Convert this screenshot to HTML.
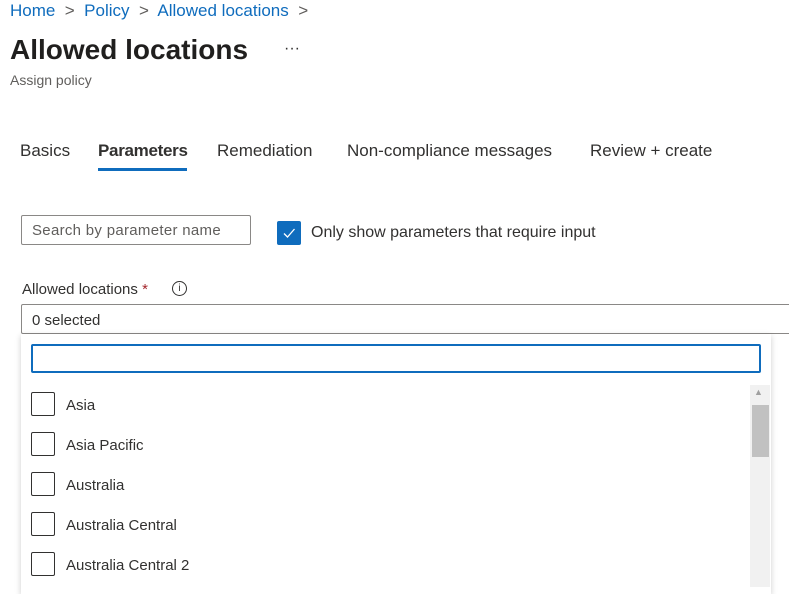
<!DOCTYPE html>
<html><head><style>
body{margin:0;width:789px;height:587px;overflow:hidden;background:#fff;font-family:"Liberation Sans",sans-serif;color:#323130;position:relative}
.a{position:absolute;white-space:nowrap}
.bc{top:1px;font-size:17px;color:#0f6cbd}
.gt{color:#605e5c}
.tab{top:141px;font-size:17px;color:#323130}
.cb{position:absolute;left:31px;width:24px;height:24px;border:1.5px solid #323130;border-radius:2px;box-sizing:border-box}
.it{position:absolute;left:66px;font-size:15px;color:#323130}
</style></head><body>
<div class="a bc" style="left:10px">Home <span class="gt">&nbsp;&gt;&nbsp;</span> Policy <span class="gt">&nbsp;&gt;&nbsp;</span> Allowed locations <span class="gt">&nbsp;&gt;</span></div>
<div class="a" style="left:10px;top:34px;font-size:28px;font-weight:bold;color:#201f1e">Allowed locations</div>
<div class="a" style="left:284px;top:40px;font-size:16px;color:#323130">···</div>
<div class="a" style="left:10px;top:72px;font-size:14px;color:#605e5c">Assign policy</div>
<div class="a tab" style="left:20px">Basics</div>
<div class="a tab" style="left:98px;font-weight:bold;letter-spacing:-0.3px">Parameters</div>
<div style="position:absolute;left:98px;top:168px;width:89px;height:3px;background:#0f6cbd"></div>
<div class="a tab" style="left:217px">Remediation</div>
<div class="a tab" style="left:347px">Non-compliance messages</div>
<div class="a tab" style="left:590px">Review + create</div>
<div style="position:absolute;left:21px;top:215px;width:230px;height:30px;border:1px solid #8a8886;border-radius:2px;box-sizing:border-box"></div>
<div class="a" style="left:32px;top:222px;font-size:15px;color:#605e5c;letter-spacing:0.3px">Search by parameter name</div>
<div style="position:absolute;left:277px;top:221px;width:24px;height:24px;background:#0f6cbd;border-radius:2px"><svg width="24" height="24"><path d="M7 12.5l3.5 3.5 7-8" stroke="#fff" stroke-width="1.3" fill="none"/></svg></div>
<div class="a" style="left:311px;top:224px;font-size:16px;color:#323130">Only show parameters that require input</div>
<div class="a" style="left:22px;top:281px;font-size:15px;color:#323130">Allowed locations <span style="color:#a4262c">*</span></div>
<div style="position:absolute;left:172px;top:281px;width:15px;height:15px;border:1px solid #323130;border-radius:50%;box-sizing:border-box;font-size:10px;text-align:center;line-height:13px">i</div>
<div style="position:absolute;left:21px;top:304px;width:780px;height:30px;border:1px solid #8a8886;border-radius:2px;box-sizing:border-box"></div>
<div class="a" style="left:32px;top:312px;font-size:15px;color:#323130">0 selected</div>
<div style="position:absolute;left:21px;top:334px;width:750px;height:260px;background:#fff;box-shadow:0 2px 6px rgba(0,0,0,0.2)"></div>
<div style="position:absolute;left:31px;top:344px;width:730px;height:29px;border:2px solid #0f6cbd;border-radius:2px;box-sizing:border-box"></div>
<div style="position:absolute;left:750px;top:385px;width:20px;height:202px;background:#f1f1f1"></div>
<div class="a" style="left:754px;top:387px;font-size:9px;color:#a0a0a0">▲</div>
<div style="position:absolute;left:752px;top:405px;width:17px;height:52px;background:#c1c1c1"></div>
<div class="cb" style="top:392px"></div><div class="it" style="top:397px">Asia</div>
<div class="cb" style="top:432px"></div><div class="it" style="top:437px">Asia Pacific</div>
<div class="cb" style="top:472px"></div><div class="it" style="top:477px">Australia</div>
<div class="cb" style="top:512px"></div><div class="it" style="top:517px">Australia Central</div>
<div class="cb" style="top:552px"></div><div class="it" style="top:557px">Australia Central 2</div>
</body></html>
